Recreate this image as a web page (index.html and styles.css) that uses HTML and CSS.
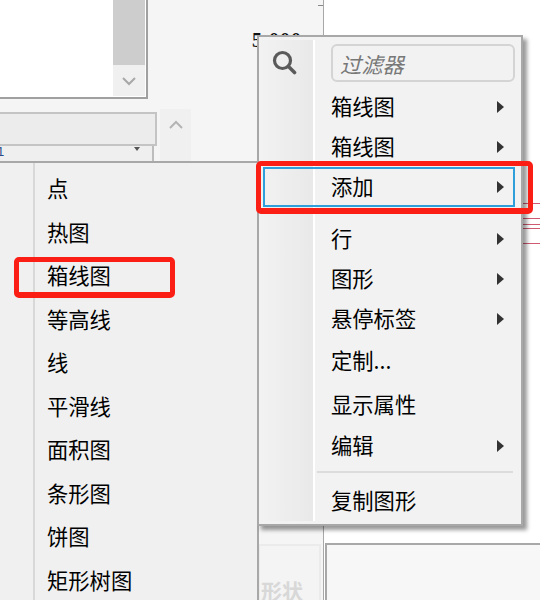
FILE: index.html
```html
<!DOCTYPE html>
<html lang="zh">
<head>
<meta charset="utf-8">
<title>菜单</title>
<link rel="stylesheet" href="styles.css">
</head>
<body>
<div class="canvas">
  <div class="list-panel">
    <div class="scrollbar">
      <div class="thumb"></div>
      <div class="arrow-btn"><svg width="14" height="10" viewBox="0 0 14 10"><path d="M1 2l6 6 6-6" fill="none" stroke="#a8a8a8" stroke-width="2"/></svg></div>
    </div>
  </div>
  <div class="combo"><div class="combo-top"></div><div class="combo-bottom"><span class="combo-val">1</span><span class="combo-caret"></span></div></div>
  <div class="up-btn"><svg width="14" height="10" viewBox="0 0 14 10"><path d="M1 8l6-6 6 6" fill="none" stroke="#b4b4b4" stroke-width="2"/></svg></div>
  <div class="right-panel"></div>
  <div class="tick"></div>
  <div class="value">5,000</div>
  <div class="red-lines"><i></i><i></i><i></i><i></i><i></i></div>
  <div class="shape-card">形状</div>
  <div class="bottom-panel"></div>

  <div class="menu submenu">
    <div class="sub-rule"></div>
    <div class="sub-item">点</div>
    <div class="sub-item">热图</div>
    <div class="sub-item">箱线图</div>
    <div class="sub-item">等高线</div>
    <div class="sub-item">线</div>
    <div class="sub-item">平滑线</div>
    <div class="sub-item">面积图</div>
    <div class="sub-item">条形图</div>
    <div class="sub-item">饼图</div>
    <div class="sub-item">矩形树图</div>
  </div>

  <div class="menu main-menu">
    <div class="gutter">
      <svg class="search" width="26" height="26" viewBox="0 0 26 26"><circle cx="10.5" cy="11.5" r="8" fill="none" stroke="#5a5a5a" stroke-width="3.2"/><path d="M16.5 17.5l6 6" stroke="#5a5a5a" stroke-width="3.6" stroke-linecap="round"/></svg>
    </div>
    <div class="menu-body">
      <div class="filter">过滤器</div>
      <div class="item"><span>箱线图</span><b class="tri"></b></div>
      <div class="item"><span>箱线图</span><b class="tri"></b></div>
      <div class="item active"><span>添加</span><b class="tri"></b></div>
      <div class="sep-space"></div>
      <div class="item"><span>行</span><b class="tri"></b></div>
      <div class="item"><span>图形</span><b class="tri"></b></div>
      <div class="item"><span>悬停标签</span><b class="tri"></b></div>
      <div class="item push-2"><span>定制...</span></div>
      <div class="item push-4"><span>显示属性</span></div>
      <div class="item push-1"><span>编辑</span><b class="tri"></b></div>
      <div class="sep"></div>
      <div class="item"><span>复制图形</span></div>
    </div>
  </div>

  <div class="hl hl-main"></div>
  <div class="hl hl-sub"></div>
</div>
</body>
</html>
```
FILE: styles.css
```css
* { box-sizing: border-box; }
html, body { margin: 0; padding: 0; }
body { width: 540px; height: 600px; overflow: hidden; background: #fff; }
.canvas { position: relative; width: 540px; height: 600px; background: #f5f5f5; overflow: hidden; font-family: "Noto Sans CJK SC", "Liberation Sans", sans-serif; color: #000; }

.list-panel { position: absolute; left: 0; top: 0; width: 148px; height: 99px; background: #fff; border-right: 2px solid #a0a0a0; border-bottom: 2px solid #a0a0a0; display: flex; justify-content: flex-end; }
.scrollbar { width: 32px; height: 96px; margin-right: 1px; background: #f0f0f0; display: flex; flex-direction: column; }
.thumb { height: 65px; background: #cdcdcd; }
.arrow-btn { flex: 1; display: flex; align-items: center; justify-content: center; padding-top: 1px; }

.combo { position: absolute; left: 0; top: 112px; width: 157px; height: 50px; }
.combo-top { height: 34px; background: #ececec; border: 2px solid #c4c4c4; border-left: 0; }
.combo-bottom { position: relative; width: 154px; height: 15px; background: #efefef; border-right: 2px solid #bdbdbd; }
.combo-val { position: absolute; left: -3px; top: 0; font: 13px/12px "Liberation Sans", sans-serif; color: #2a4a8a; }
.combo-caret { position: absolute; left: 134px; top: 1px; border: 3px solid transparent; border-top: 4px solid #555; border-bottom: 0; }

.up-btn { position: absolute; left: 160px; top: 109px; width: 31px; height: 52px; background: #f0f0f0; display: flex; justify-content: center; padding-top: 11px; }

.right-panel { position: absolute; left: 323px; top: 0; width: 217px; height: 600px; background: #fff; border-left: 1px solid #a8a8a8; }
.tick { position: absolute; left: 318px; top: 5px; width: 5px; height: 1px; background: #888; }
.value { position: absolute; left: 252px; top: 28px; font: 700 20px/24px "Liberation Serif", serif; letter-spacing: 1px; color: #111; }

.red-lines { position: absolute; left: 523px; top: 203px; width: 17px; height: 41px; }
.red-lines i { position: absolute; left: 0; right: 0; height: 1px; background: #cf5a72; }
.red-lines i:nth-child(1) { top: 0; }
.red-lines i:nth-child(2) { top: 15px; }
.red-lines i:nth-child(3) { top: 21px; }
.red-lines i:nth-child(4) { top: 25px; }
.red-lines i:nth-child(5) { top: 40px; }

.shape-card { position: absolute; left: 258px; top: 544px; width: 63px; height: 56px; background: #f4f4f4; border: 2px solid #ebebeb; border-bottom: 0; font-size: 21px; line-height: 28px; font-weight: 700; color: #d8d8d8; padding: 30px 0 0 1px; white-space: nowrap; overflow: hidden; }
.bottom-panel { position: absolute; left: 325px; top: 543px; width: 215px; height: 57px; background: #f7f7f7; border-top: 2px solid #a8a8a8; border-left: 2px solid #a8a8a8; }

.menu { position: absolute; background: #f0f0f0; }
.submenu { left: -2px; top: 161px; width: 261px; height: 441px; border: 2px solid #a8a8a8; padding: 3px 0 0 36px; }
.sub-rule { position: absolute; left: 33px; top: 0; bottom: 0; width: 2px; background: #d8d8d8; }
.sub-item { height: 43.55px; padding-left: 11px; font-size: 21.3px; line-height: 43.55px; white-space: nowrap; }

.main-menu { left: 257px; top: 35px; width: 266px; height: 491px; border: 2px solid #a8a8a8; background: #f2f2f2; display: flex; padding: 3px 0; box-shadow: 4px 4px 4px rgba(0,0,0,.4); }
.gutter { width: 54px; background: linear-gradient(90deg, #f2f2f2, #e9e9e9); padding: 9px 0 0 13px; flex: none; }
.search { display: block; }
.menu-body { flex: 1; padding: 4px 0 0 16px; border-left: 2px solid #fff; min-width: 0; }
.filter { width: 184px; height: 38px; margin-bottom: 5px; border: 2px solid #d4d4d4; border-radius: 6px; padding-left: 7px; font-size: 21.3px; line-height: 36px; font-style: italic; color: #777; }
.item { width: 173px; height: 40px; display: flex; align-items: center; justify-content: space-between; font-size: 21.3px; line-height: 38px; white-space: nowrap; }
.item span { margin-top: -2px; }
.tri { width: 0; height: 0; border-left: 7px solid #333; border-top: 6px solid transparent; border-bottom: 6px solid transparent; }
.active { position: relative; }
.active::before { content: ""; position: absolute; left: -68px; right: -11px; top: 0; bottom: 0; border: 2px solid #2f9fdc; }
.sep-space { height: 12px; }
.push-2 { margin-top: 2px; }
.push-4 { margin-top: 4px; }
.push-1 { margin-top: 1px; }
.sep { height: 2px; width: 196px; margin: 5px 0 8px -14px; background: #dcdcdc; }

.hl { position: absolute; border: 5px solid #fa1e14; border-bottom-width: 6px; border-radius: 5px; }
.hl-main { left: 256px; top: 161px; width: 277px; height: 53px; }
.hl-sub { left: 14px; top: 257px; width: 161px; height: 41px; }
```
